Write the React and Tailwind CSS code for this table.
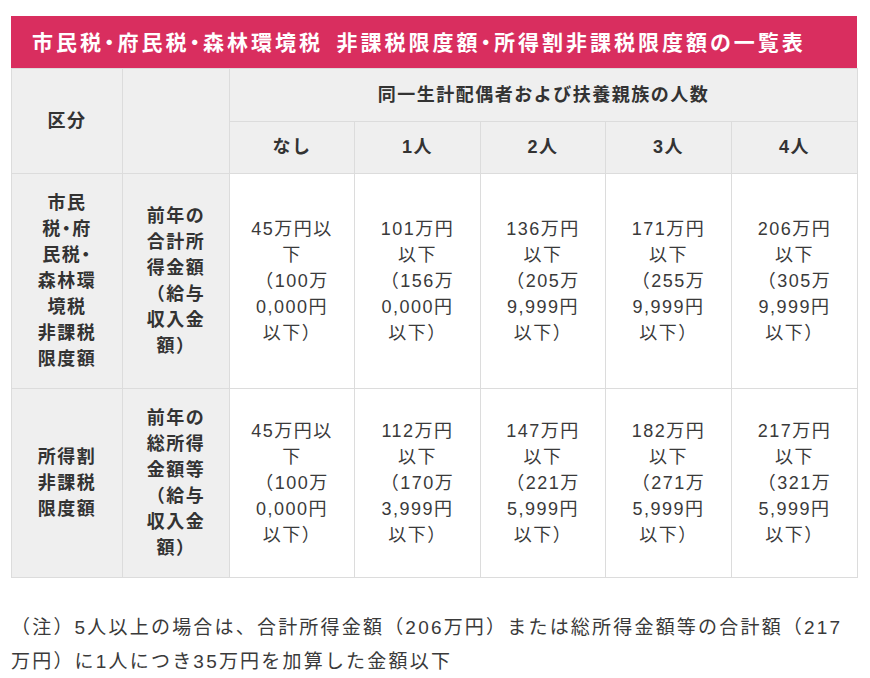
import React from "react";

// 住民税 非課税限度額の一覧表（府民税・市民税・森林環境税）
const HEADS = ["なし", "1人", "2人", "3人", "4人"];

const ROWS = [
  {
    label: ["市民", "税・府", "民税・", "森林環", "境税", "非課税", "限度額"],
    basis: ["前年の", "合計所", "得金額", "（給与", "収入金", "額）"],
    values: [
      ["45万円以", "下", "（100万", "0,000円", "以下）"],
      ["101万円", "以下", "（156万", "0,000円", "以下）"],
      ["136万円", "以下", "（205万", "9,999円", "以下）"],
      ["171万円", "以下", "（255万", "9,999円", "以下）"],
      ["206万円", "以下", "（305万", "9,999円", "以下）"],
    ],
  },
  {
    label: ["所得割", "非課税", "限度額"],
    basis: ["前年の", "総所得", "金額等", "（給与", "収入金", "額）"],
    values: [
      ["45万円以", "下", "（100万", "0,000円", "以下）"],
      ["112万円", "以下", "（170万", "3,999円", "以下）"],
      ["147万円", "以下", "（221万", "5,999円", "以下）"],
      ["182万円", "以下", "（271万", "5,999円", "以下）"],
      ["217万円", "以下", "（321万", "5,999円", "以下）"],
    ],
  },
];

function Lines({ lines }) {
  return lines.map((l, i) => (
    <React.Fragment key={i}>
      {i > 0 && <br />}
      {l}
    </React.Fragment>
  ));
}

const cell = "border border-[#dcdcdc] text-center align-middle";
const head = `${cell} bg-[#efefef] font-bold text-[#333] h-[52px] p-0`;

export default function App() {
  return (
    <div className="min-h-screen bg-white pl-[11px] pr-[13px] pt-4 font-['Liberation_Sans','Noto_Sans_CJK_JP',sans-serif] text-[18px] tracking-[1.5px] text-[#3a3a3a]">
      <div className="flex h-[52px] items-center bg-[#d92e5f] pl-[21px] font-['Noto_Sans_CJK_JP',sans-serif] text-[21px] font-bold tracking-[3px] text-white [font-feature-settings:'palt']">
        {"市民税・府民税・森林環境税\u2002非課税限度額・所得割非課税限度額の一覧表"}
      </div>

      <table className="w-full table-fixed border-collapse">
        <colgroup>
          <col className="w-[111px]" />
          <col className="w-[107px]" />
          <col className="w-[125px]" />
          <col className="w-[126px]" />
          <col className="w-[125px]" />
          <col className="w-[126px]" />
          <col className="w-[126px]" />
        </colgroup>
        <thead>
          <tr>
            <th rowSpan={2} className={head}>区分</th>
            <th rowSpan={2} className={head}></th>
            <th colSpan={5} className={`${head} h-[53px]`}>
              同一生計配偶者および扶養親族の人数
            </th>
          </tr>
          <tr>
            {HEADS.map((h) => (
              <th key={h} className={head}>{h}</th>
            ))}
          </tr>
        </thead>
        <tbody>
          {ROWS.map((row, r) => (
            <tr key={r}>
              <td className={`${cell} bg-[#efefef] py-4 font-bold text-[#333] leading-[26px] [font-feature-settings:'palt']`}>
                <Lines lines={row.label} />
              </td>
              <td className={`${cell} bg-[#efefef] py-4 font-bold text-[#333] leading-[26px]`}>
                <Lines lines={row.basis} />
              </td>
              {row.values.map((v, i) => (
                <td key={i} className={`${cell} bg-white py-4 leading-[26px]`}>
                  <Lines lines={v} />
                </td>
              ))}
            </tr>
          ))}
        </tbody>
      </table>

      <p className="mt-[33px] text-[19px] leading-[34px] tracking-[2.2px]">
        （注）5人以上の場合は、合計所得金額（206万円）または総所得金額等の合計額（217
        <br />
        万円）に1人につき35万円を加算した金額以下
      </p>
    </div>
  );
}
